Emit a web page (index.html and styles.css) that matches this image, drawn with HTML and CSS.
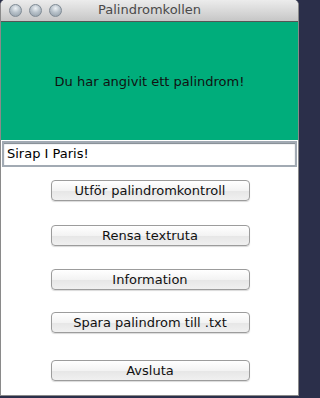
FILE: index.html
```html
<!DOCTYPE html>
<html>
<head>
<meta charset="utf-8">
<link rel="stylesheet" href="styles.css">
</head>
<body>
<div class="window">
  <div class="titlebar">
    <div class="lights">
      <span class="light"></span>
      <span class="light"></span>
      <span class="light"></span>
    </div>
    <div class="title">Palindromkollen</div>
  </div>
  <div class="result">Du har angivit ett palindrom!</div>
  <div class="field">Sirap I Paris!</div>
  <div class="buttons">
    <div class="btn b1">Utför palindromkontroll</div>
    <div class="btn b2">Rensa textruta</div>
    <div class="btn b3">Information</div>
    <div class="btn b4">Spara palindrom till .txt</div>
    <div class="btn b5">Avsluta</div>
  </div>
</div>
</body>
</html>
```
FILE: styles.css
```css
html, body {
  margin: 0;
  padding: 0;
  background: #2b2f4a;
}
.window {
  box-sizing: border-box;
  width: 299px;
  height: 396px;
  background: #ffffff;
  border-left: 1px solid #8a8a8a;
  border-right: 1px solid #8a8a8a;
  border-bottom: 1px solid #8a8a8a;
  border-radius: 5px 5px 0 0;
  overflow: hidden;
  font-family: "DejaVu Sans", sans-serif;
  display: flex;
  flex-direction: column;
}
.titlebar {
  height: 22px;
  box-sizing: border-box;
  background: linear-gradient(#ececec, #d2d2d2 70%, #c6c6c6);
  border-bottom: 1px solid #555;
  display: flex;
  align-items: center;
  position: relative;
}
.lights {
  display: flex;
  gap: 7px;
  padding-left: 8px;
}
.light {
  width: 13px;
  height: 13px;
  border-radius: 50%;
  box-sizing: border-box;
  border: 1px solid #7f8a94;
  background: radial-gradient(circle at 50% 30%, #eef2f5 0, #b9c3cb 45%, #8e9aa5 100%);
}
.title {
  position: absolute;
  left: 0;
  right: 0;
  top: 2px;
  text-align: center;
  font-size: 13px;
  color: #4a4a4a;
}
.result {
  height: 118px;
  background: #00ad7b;
  display: flex;
  align-items: center;
  justify-content: center;
  font-size: 13px;
  color: #111;
  padding-top: 1px;
  box-sizing: border-box;
}
.field {
  margin: 1px 1px 0 1px;
  height: 26px;
  box-sizing: border-box;
  border: 2px solid #a2aab3;
  box-shadow: inset 0 1px 1px #7d858d;
  padding: 3px 0 0 3px;
  font-size: 13px;
  color: #000;
}
.buttons {
  display: flex;
  flex-direction: column;
  align-items: center;
}
.btn {
  width: 199px;
  height: 21px;
  box-sizing: border-box;
  border: 1px solid #9c9c9c;
  border-radius: 4px;
  background: linear-gradient(#ffffff, #f3f3f3 50%, #e6e6e6 51%, #f0f0f0);
  box-shadow: 0 1px 1px rgba(0,0,0,0.15);
  font-size: 13px;
  color: #111;
  text-align: center;
  line-height: 19px;
  margin-left: 1px;
}
.b1 { margin-top: 13px; }
.b2 { margin-top: 24px; }
.b3 { margin-top: 23px; }
.b4 { margin-top: 22px; }
.b5 { margin-top: 27px; }
```
